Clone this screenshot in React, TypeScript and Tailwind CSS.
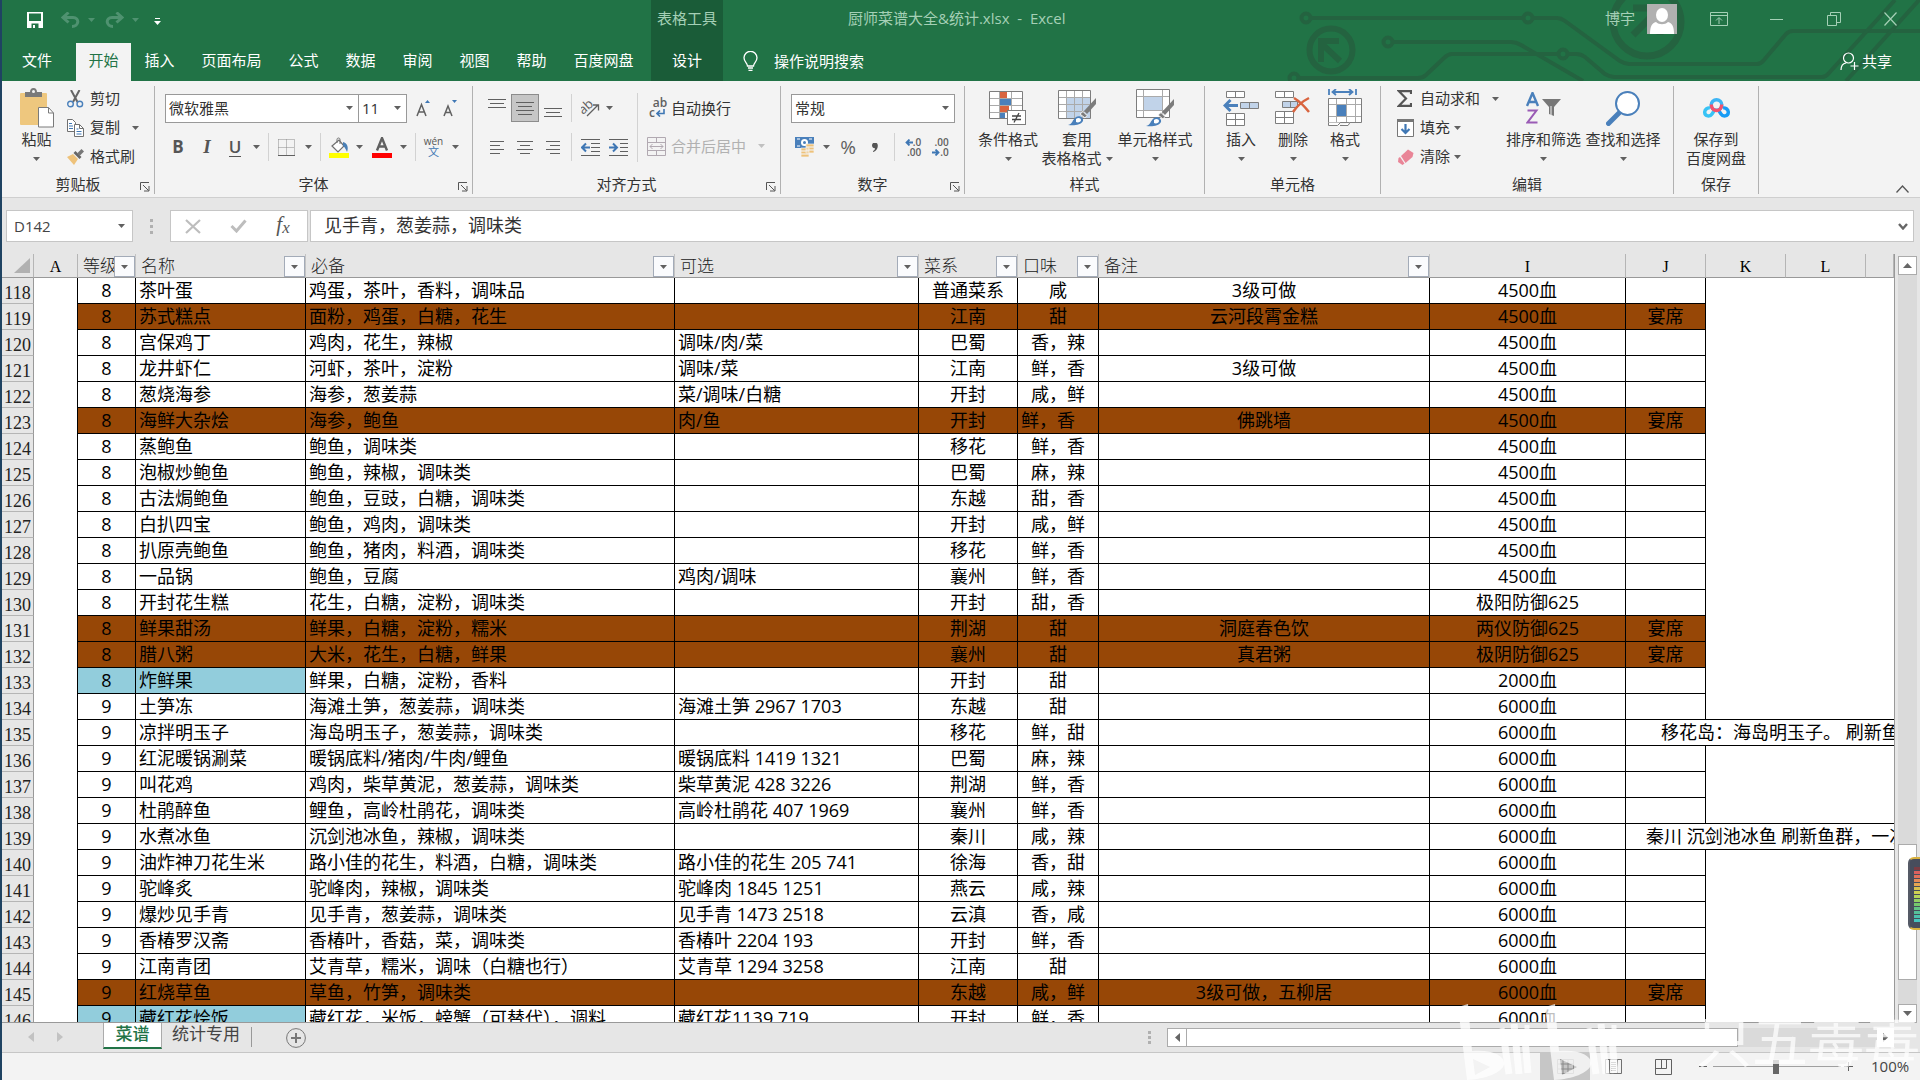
import React from "react";

type Tone = "plain" | "brown" | "blue";
type Row = {
  n: number;
  level: string;
  name: string;
  need: string;
  opt?: string;
  school: string;
  taste: string;
  note?: string;
  effect: string;
  extra?: string;
  tone?: Tone;
  spill?: string;
  spillPad?: string;
  tasteLeft?: boolean;
};

const ROWS: Row[] = [
  { n: 118, level: "8", name: "茶叶蛋", need: "鸡蛋，茶叶，香料，调味品", school: "普通菜系", taste: "咸", note: "3级可做", effect: "4500血" },
  { n: 119, level: "8", name: "苏式糕点", need: "面粉，鸡蛋，白糖，花生", school: "江南", taste: "甜", note: "云河段霄金糕", effect: "4500血", extra: "宴席", tone: "brown" },
  { n: 120, level: "8", name: "宫保鸡丁", need: "鸡肉，花生，辣椒", opt: "调味/肉/菜", school: "巴蜀", taste: "香，辣", effect: "4500血" },
  { n: 121, level: "8", name: "龙井虾仁", need: "河虾，茶叶，淀粉", opt: "调味/菜", school: "江南", taste: "鲜，香", note: "3级可做", effect: "4500血" },
  { n: 122, level: "8", name: "葱烧海参", need: "海参，葱姜蒜", opt: "菜/调味/白糖", school: "开封", taste: "咸，鲜", effect: "4500血" },
  { n: 123, level: "8", name: "海鲜大杂烩", need: "海参，鲍鱼", opt: "肉/鱼", school: "开封", taste: "鲜，香", tasteLeft: true, note: "佛跳墙", effect: "4500血", extra: "宴席", tone: "brown" },
  { n: 124, level: "8", name: "蒸鲍鱼", need: "鲍鱼，调味类", school: "移花", taste: "鲜，香", effect: "4500血" },
  { n: 125, level: "8", name: "泡椒炒鲍鱼", need: "鲍鱼，辣椒，调味类", school: "巴蜀", taste: "麻，辣", effect: "4500血" },
  { n: 126, level: "8", name: "古法焗鲍鱼", need: "鲍鱼，豆豉，白糖，调味类", school: "东越", taste: "甜，香", effect: "4500血" },
  { n: 127, level: "8", name: "白扒四宝", need: "鲍鱼，鸡肉，调味类", school: "开封", taste: "咸，鲜", effect: "4500血" },
  { n: 128, level: "8", name: "扒原壳鲍鱼", need: "鲍鱼，猪肉，料酒，调味类", school: "移花", taste: "鲜，香", effect: "4500血" },
  { n: 129, level: "8", name: "一品锅", need: "鲍鱼，豆腐", opt: "鸡肉/调味", school: "襄州", taste: "鲜，香", effect: "4500血" },
  { n: 130, level: "8", name: "开封花生糕", need: "花生，白糖，淀粉，调味类", school: "开封", taste: "甜，香", effect: "极阳防御625" },
  { n: 131, level: "8", name: "鲜果甜汤", need: "鲜果，白糖，淀粉，糯米", school: "荆湖", taste: "甜", note: "洞庭春色饮", effect: "两仪防御625", extra: "宴席", tone: "brown" },
  { n: 132, level: "8", name: "腊八粥", need: "大米，花生，白糖，鲜果", school: "襄州", taste: "甜", note: "真君粥", effect: "极阴防御625", extra: "宴席", tone: "brown" },
  { n: 133, level: "8", name: "炸鲜果", need: "鲜果，白糖，淀粉，香料", school: "开封", taste: "甜", effect: "2000血", tone: "blue" },
  { n: 134, level: "9", name: "土笋冻", need: "海滩土笋，葱姜蒜，调味类", opt: "海滩土笋 2967 1703", school: "东越", taste: "甜", effect: "6000血" },
  { n: 135, level: "9", name: "凉拌明玉子", need: "海岛明玉子，葱姜蒜，调味类", school: "移花", taste: "鲜，甜", effect: "6000血", spill: "移花岛：海岛明玉子。 刷新鱼群", spillPad: "pl-[35px]" },
  { n: 136, level: "9", name: "红泥暖锅涮菜", need: "暖锅底料/猪肉/牛肉/鲤鱼", opt: "暖锅底料 1419 1321", school: "巴蜀", taste: "麻，辣", effect: "6000血" },
  { n: 137, level: "9", name: "叫花鸡", need: "鸡肉，柴草黄泥，葱姜蒜，调味类", opt: "柴草黄泥 428 3226", school: "荆湖", taste: "鲜，香", effect: "6000血" },
  { n: 138, level: "9", name: "杜鹃醉鱼", need: "鲤鱼，高岭杜鹃花，调味类", opt: "高岭杜鹃花 407 1969", school: "襄州", taste: "鲜，香", effect: "6000血" },
  { n: 139, level: "9", name: "水煮冰鱼", need: "沉剑池冰鱼，辣椒，调味类", school: "秦川", taste: "咸，辣", effect: "6000血", spill: "秦川 沉剑池冰鱼 刷新鱼群，一次", spillPad: "pl-5" },
  { n: 140, level: "9", name: "油炸神刀花生米", need: "路小佳的花生，料酒，白糖，调味类", opt: "路小佳的花生 205 741", school: "徐海", taste: "香，甜", effect: "6000血" },
  { n: 141, level: "9", name: "驼峰炙", need: "驼峰肉，辣椒，调味类", opt: "驼峰肉 1845 1251", school: "燕云", taste: "咸，辣", effect: "6000血" },
  { n: 142, level: "9", name: "爆炒见手青", need: "见手青，葱姜蒜，调味类", opt: "见手青 1473 2518", school: "云滇", taste: "香，咸", effect: "6000血" },
  { n: 143, level: "9", name: "香椿罗汉斋", need: "香椿叶，香菇，菜，调味类", opt: "香椿叶 2204 193", school: "开封", taste: "鲜，香", effect: "6000血" },
  { n: 144, level: "9", name: "江南青团", need: "艾青草，糯米，调味（白糖也行）", opt: "艾青草 1294 3258", school: "江南", taste: "甜", effect: "6000血" },
  { n: 145, level: "9", name: "红烧草鱼", need: "草鱼，竹笋，调味类", school: "东越", taste: "咸，鲜", note: "3级可做，五柳居", effect: "6000血", extra: "宴席", tone: "brown" },
  { n: 146, level: "9", name: "藏红花烩饭", need: "藏红花，米饭，螃蟹（可替代），调料", opt: "藏红花1139 719", school: "开封", taste: "鲜，香", effect: "6000血", tone: "blue" },
];

/* ---------- small shared pieces ---------- */

function Arrow({ className = "text-[#606060]" }: { className?: string }) {
  return (
    <svg width="7" height="4" viewBox="0 0 7 4" className={"shrink-0 " + className} aria-hidden="true">
      <path d="M0 0h7L3.5 4z" fill="currentColor" />
    </svg>
  );
}

function Slot({ w, label, children, className = "" }: { w: string; label: string; children: React.ReactNode; className?: string }) {
  return (
    <button type="button" aria-label={label} className={"flex h-7 shrink-0 items-center justify-center " + w + " " + className}>
      {children}
    </button>
  );
}

function Sep({ w }: { w: string }) {
  return (
    <div className={"flex h-7 shrink-0 justify-center " + w}>
      <div className="w-px bg-[#d2d2d2]" />
    </div>
  );
}

function Group({ w, label, launcher, children }: { w: string; label: string; launcher?: boolean; children: React.ReactNode }) {
  return (
    <section className={"flex h-[108px] shrink-0 flex-col border-r border-[#b1b1b1] " + w}>
      <div className="h-[88px] shrink-0">{children}</div>
      <div className="relative flex h-5 shrink-0 items-center justify-center text-[15px] leading-5 text-[#333]">
        {label}
        {launcher && (
          <button type="button" aria-label={label + "设置"} className="absolute right-1 top-2">
            <svg width="10" height="10" viewBox="0 0 10 10" fill="none" stroke="#555">
              <path d="M.5 8V.5H9M3 3l5.500 5.500M9 4v5H4" />
            </svg>
          </button>
        )}
      </div>
    </section>
  );
}

function Combo({ w, label, value }: { w: string; label: string; value: string }) {
  return (
    <div className={"relative h-[29px] shrink-0 " + w}>
      <select aria-label={label} defaultValue={value} className="h-full w-full appearance-none border border-[#999] bg-white px-[3px] text-[15px] text-[#333]">
        <option>{value}</option>
      </select>
      <span className="pointer-events-none absolute right-[6px] top-3">
        <Arrow />
      </span>
    </div>
  );
}

function Lines({ rows, y = 0 }: { rows: [number, number][]; y?: number }) {
  return (
    <svg width="18" height="28" viewBox="0 0 18 28" stroke="#606060" fill="none">
      {rows.map(([a, b], i) => (
        <path key={i} d={`M${a} ${y + i * 4 + 0.5}H${b}`} />
      ))}
    </svg>
  );
}

function BigButton({ w, icon, lines, arrow = "below" }: { w: string; icon: React.ReactNode; lines: string[]; arrow?: "below" | "side" | "none" }) {
  return (
    <button type="button" className={"flex h-[88px] shrink-0 flex-col items-center text-[15px] leading-[19px] text-[#333] " + w}>
      <span className="flex h-11 items-center justify-center">{icon}</span>
      {lines.map((l, i) => (
        <span key={l} className="flex items-center gap-1 whitespace-nowrap">
          {l}
          {arrow === "side" && i === lines.length - 1 && <Arrow />}
        </span>
      ))}
      {arrow === "below" && (
        <span className="flex h-[19px] items-center">
          <Arrow />
        </span>
      )}
    </button>
  );
}

function SmallButton({ icon, text, arrowGap }: { icon: React.ReactNode; text: string; arrowGap?: string }) {
  return (
    <button type="button" className="flex h-[29px] items-center pb-1 text-[15px] text-[#333]">
      <span className="flex w-[23px] items-center">{icon}</span>
      <span className="whitespace-nowrap">{text}</span>
      {arrowGap && (
        <span className={arrowGap}>
          <Arrow />
        </span>
      )}
    </button>
  );
}

/* ---------- ribbon icons ---------- */

const PasteIcon = () => (
  <svg width="36" height="40" viewBox="0 0 36 40">
    <rect x="1" y="5" width="27" height="32" rx="1" fill="#eec77e" />
    <path d="M6 9V4h5c0-2 1-4 3.500-4S18 2 18 4h5v5z" fill="#7a7a7a" />
    <circle cx="14.500" cy="3.500" r="1.500" fill="#f3f3f3" />
    <path d="M19.500 19.500h10l5 5.500v14h-15z" fill="#fff" stroke="#7a7a7a" />
    <path d="M29.500 19.500V25h5" fill="none" stroke="#7a7a7a" />
  </svg>
);
const CutIcon = () => (
  <svg width="17" height="18" viewBox="0 0 17 18" fill="none">
    <path d="M4 0l6.500 12M12.500 0L6 12" stroke="#666" strokeWidth="2" />
    <circle cx="3.500" cy="14" r="2.800" stroke="#4a80bb" strokeWidth="1.400" />
    <circle cx="12.800" cy="14" r="2.800" stroke="#4a80bb" strokeWidth="1.400" />
  </svg>
);
const CopyIcon = () => (
  <svg width="17" height="18" viewBox="0 0 17 18">
    <g fill="#fff" stroke="#707070">
      <path d="M.5.5h5l3 3v9h-8z" />
      <path d="M7.500 5.500h5l4 4v8h-9z" />
      <path d="M12.500 5.500v4h4" fill="none" />
    </g>
    <path d="M2 4.500h3M2 7h4M2 9.500h4M9.500 10h2M9.500 12.500h5M9.500 15h5" stroke="#3f77b4" />
  </svg>
);
const BrushIcon = () => (
  <svg width="17" height="16" viewBox="0 0 17 16">
    <path d="M0 8l6-3 5 5-4 6z" fill="#eec27a" />
    <path d="M6.500 4l2-2 6 6-2 2z" fill="#666" />
    <path d="M10 4.500L14.500 0 17 2.500 12.500 7z" fill="#777" />
  </svg>
);
const BorderIcon = () => (
  <svg width="17" height="17" viewBox="0 0 17 17" fill="none">
    <path d="M.5.500h16M.5 8.500h16M.5.500v15M8.500.500v15M16.500.500v15" stroke="#8a8a8a" strokeDasharray="1 1" />
    <path d="M0 16.500h17" stroke="#606060" />
  </svg>
);
const FillIcon = () => (
  <svg width="20" height="21" viewBox="0 0 20 21">
    <path d="M3 9l7-6 5 6-6 6z" fill="#fff" stroke="#707070" strokeWidth="1.200" />
    <path d="M8 6V2.500C8 .5 11 .5 11 2.500V7" fill="none" stroke="#707070" />
    <path d="M14 5c4 1 6 5 4 10-1-2-2-5-4-6z" fill="#4a7fb5" />
    <rect y="16" width="20" height="5" fill="#ff0" />
  </svg>
);
const PersonaIcon = () => (
  <svg width="30" height="30" viewBox="0 0 30 30">
    <rect width="30" height="30" fill="#b0b0b0" />
    <ellipse cx="15" cy="11" rx="6" ry="7" fill="#fff" />
    <path d="M3 30c0-8 2-11 6-12 3 3 9 3 12 0 4 1 6 4 6 12z" fill="#fff" />
  </svg>
);

const PaintBrush = () => (
  <g>
    <path d="M38 8L26 21l3 3 9-10z" fill="#7c7c7c" />
    <path d="M25 21.500l4 4-2 2.500-5-4z" fill="#7c7c7c" stroke="#f3f3f3" />
    <path d="M10 35c5-1 4-5 8-8 4-2 8 1 7 4-2 4-9 5-15 4z" fill="#4a80bb" />
    <path d="M18 29c2-2 5-1 5 1s-3 3-5 2z" fill="#fff" />
  </g>
);

const CondIcon = () => (
  <svg width="38" height="35" viewBox="0 0 38 35">
    <path d="M.5.500h33v27h-33z" fill="#fff" />
    <rect x="11" y="1" width="7" height="6" fill="#d9643f" />
    <rect x="11" y="8" width="11" height="6" fill="#4a80bb" />
    <rect x="11" y="15" width="9" height="6" fill="#d9643f" />
    <rect x="11" y="22" width="5" height="5" fill="#4a80bb" />
    <path d="M.5 7.500h33M.5 14.500h33M.5 21.500h33M10.500.500v27M22.500.500v27" stroke="#aaa" fill="none" />
    <path d="M.5.500h33v27h-33z" fill="none" stroke="#7d7d7d" />
    <rect x="18.500" y="19.500" width="18" height="14" fill="#fff" stroke="#7d7d7d" />
    <path d="M23 25h9M23 28.500h9M30 22l-5 9.500" stroke="#444" strokeWidth="1.300" />
  </svg>
);
const TableFmtIcon = () => (
  <svg width="39" height="36" viewBox="0 0 39 36">
    <path d="M.5.500h32v28h-32z" fill="#fff" />
    <path d="M9 8h23v20H9z" fill="#c1d3e9" />
    <path d="M.5 7.500h32M.5 14.500h32M.5 21.500h32M8.500.500v28M16.500.500v28M24.500.500v28" stroke="#aaa" fill="none" />
    <path d="M.5.500h32v28h-32z" fill="none" stroke="#7d7d7d" />
    <PaintBrush />
  </svg>
);
const CellStyleIcon = () => (
  <svg width="39" height="38" viewBox="0 0 39 38">
    <path d="M.5.500h33v28h-33z" fill="#fff" />
    <path d="M.5 7.500h33M.5 21.500h33M7.500.500v28M26.500.500v28" stroke="#aaa" fill="none" />
    <path d="M8 8h18v13H8z" fill="#c1d3e9" />
    <path d="M.5.500h33v28h-33z" fill="none" stroke="#7d7d7d" />
    <g transform="translate(0 2)">
      <PaintBrush />
    </g>
  </svg>
);
const InsertIcon = () => (
  <svg width="36" height="36" viewBox="0 0 36 36">
    <g fill="#fff" stroke="#7d7d7d">
      <path d="M3.500 1.500h18v6h-18zM12.500 1.500v6" />
      <path d="M3.500 23.500h18v12h-18zM12.500 23.500v12M3.500 29.500h18" />
      <path d="M17.500 12.500h18v6h-18zM26.500 12.500v6" fill="#c1d3e9" />
    </g>
    <path d="M15 15.500H2M7.500 10L2 15.500 7.500 21" stroke="#4a80bb" strokeWidth="3" fill="none" />
  </svg>
);
const DeleteIcon = () => (
  <svg width="36" height="36" viewBox="0 0 36 36">
    <g fill="#fff" stroke="#7d7d7d">
      <path d="M.5 1.500h18v6H.5zM9.500 1.500v6" />
      <path d="M.5 21.500h18v12H.5zM9.500 21.500v12M.5 27.500h18" />
      <path d="M7.500 11.500h15v6h-15zM15.500 11.500v6" fill="#c1d3e9" />
    </g>
    <path d="M19 8c5 3 11 9 15 14M34 8c-6 3-12 8-16 14" stroke="#d9643f" strokeWidth="2.500" fill="none" />
  </svg>
);
const FormatIcon = () => (
  <svg width="35" height="38" viewBox="0 0 35 38">
    <path d="M1 0v6M28 0v6M5 3h19M8 0L4.500 3 8 6M21 0l3.500 3L21 6" stroke="#4a80bb" strokeWidth="1.800" fill="none" />
    <path d="M.5 9.500h33v24h-33z" fill="#fff" />
    <path d="M.5 15.500h33M.5 27.500h33M8.500 9.500v24M18.500 9.500v24M27.500 9.500v24" stroke="#aaa" fill="none" />
    <path d="M.5 9.500h33v24h-33z" fill="none" stroke="#7d7d7d" />
    <rect x="9" y="16" width="9" height="11" fill="#4a80bb" />
    <path d="M.5 33.500v3h9l3-3M12 36.500h8l2-3" fill="#fff" stroke="#7d7d7d" />
  </svg>
);
const SortIcon = () => (
  <svg width="35" height="32" viewBox="0 0 35 32" fill="none">
    <path d="M1 14L6.500 1 12 14M3 10h7" stroke="#4a80bb" strokeWidth="2.400" />
    <path d="M1.500 18.500h9L1.500 30.500h10" stroke="#9a5bb5" strokeWidth="2" />
    <path d="M16 7h19l-7 8v9l-5-2v-7z" fill="#777" />
    <path d="M25 14v9" stroke="#f3f3f3" />
  </svg>
);
const FindIcon = () => (
  <svg width="35" height="35" viewBox="0 0 35 35">
    <path d="M14 21L2.500 32.500" stroke="#4a80bb" strokeWidth="5" strokeLinecap="round" />
    <circle cx="21.500" cy="12.500" r="11.500" fill="#fff" stroke="#4a80bb" strokeWidth="2" />
  </svg>
);
const CloudIcon = () => (
  <svg width="27" height="21" viewBox="0 0 27 21" fill="none" strokeWidth="3.400">
    <circle cx="13.500" cy="7" r="5.300" stroke="#3db5f5" />
    <path d="M12 11.500l-3 4.500c-2 3-7 2.500-7.300-1.500C1.500 11 5 9.500 7 10" stroke="#38c3f5" />
    <path d="M15 11.500l3 4.500c2 3 7 2.500 7.300-1.500.2-3.500-3.300-5-5.300-4.500" stroke="#189cf5" />
    <path d="M8.300 6.500c.4 8 9.900 8 10.400 0" stroke="#f5516c" />
  </svg>
);

/* ---------- title bar and tabs ---------- */

const TABS: [string, string][] = [
  ["插入", "w-[57px]"],
  ["页面布局", "w-[87px]"],
  ["公式", "w-[57px]"],
  ["数据", "w-[57px]"],
  ["审阅", "w-[57px]"],
  ["视图", "w-[57px]"],
  ["帮助", "w-[57px]"],
  ["百度网盘", "w-[87px]"],
];

function Circuit() {
  return (
    <svg width="640" height="81" viewBox="0 0 640 81" fill="none" stroke="#246340" className="pointer-events-none absolute right-0 top-0" aria-hidden="true">
      <g strokeWidth="4">
        <circle cx="26" cy="18" r="4.500" />
        <circle cx="248" cy="18" r="4.500" />
        <path d="M31 18h212M253 18h24q4 0 8 3l55 40q5 3 9 3h128q4 0 7-4l22-26q3-3 7-3h129" />
        <circle cx="108" cy="42" r="4.500" />
        <path d="M113 42h118q5 0 10 3l62 36" />
        <circle cx="283" cy="54" r="4.500" />
        <path d="M278 54H172q-4 0-8 4l-18 17q-3 3-8 3H19M288 54h8q5 0 9 3l20 17q5 3 9 3h208q4 0 7-4L615 0" />
        <circle cx="14" cy="78" r="4.500" />
        <path d="M566 81l74-82" />
      </g>
      <circle cx="51" cy="50" r="21.500" strokeWidth="6" />
      <path d="M38 41h21M41 40v22M42 44l18 17" strokeWidth="6" />
      <circle cx="367" cy="22" r="34" strokeWidth="7" />
      <path d="M353 35l22-22M353 8h27v27" strokeWidth="7" />
    </svg>
  );
}

function Header() {
  return (
    <header className="relative flex h-[81px] shrink-0 bg-[#217346] text-[15px] text-white">
      <Circuit />
      <div className="flex w-[649px] shrink-0 flex-col">
        <div className="flex h-[43px] items-center pb-1 pl-[25px]">
          <button type="button" aria-label="保存" className="mr-[18px]">
            <svg width="16" height="16" viewBox="0 0 16 16">
              <path d="M0 0h16v16H0z" fill="#fff" />
              <path d="M2 1.500h12V9H2zM4.500 11.500h7V16h-7z" fill="#217346" />
              <path d="M6 13h2v3H6z" fill="#fff" />
            </svg>
          </button>
          <button type="button" aria-label="撤消" className="flex items-center gap-2">
            <svg width="19" height="16" viewBox="0 0 19 16" fill="none" stroke="#4f9270" strokeWidth="3">
              <path d="M7.500.5L2 5.500l5.500 5M3 5.500h9c7 0 6 9-1 9" />
            </svg>
            <Arrow className="text-[#4f9270]" />
          </button>
          <button type="button" aria-label="恢复" className="ml-[10px] flex items-center gap-2">
            <svg width="19" height="16" viewBox="0 0 19 16" fill="none" stroke="#4f9270" strokeWidth="3">
              <path d="M11.500.5l5.500 5-5.500 5M16 5.500H7c-7 0-6 9 1 9" />
            </svg>
            <Arrow className="text-[#4f9270]" />
          </button>
          <button type="button" aria-label="自定义快速访问工具栏" className="ml-[15px] mt-1">
            <svg width="7" height="7" viewBox="0 0 7 7" fill="#fff">
              <path d="M1 0h5v1H1zM0 3h7L3.500 7z" />
            </svg>
          </button>
        </div>
        <nav className="flex h-[38px] items-stretch">
          <button type="button" className="w-[74px] pb-1 pr-1">文件</button>
          <button type="button" className="w-[55px] bg-[#f3f3f3] pb-1 text-[#217346]">开始</button>
          {TABS.map(([t, w]) => (
            <button key={t} type="button" className={"pb-1 " + w}>
              {t}
            </button>
          ))}
        </nav>
      </div>
      <div className="flex w-[72px] shrink-0 flex-col bg-[#1a5c38]">
        <div className="flex h-[43px] items-center justify-center pb-[6px] text-[#a5d0b6]">表格工具</div>
        <button type="button" className="h-[38px] pb-1">设计</button>
      </div>
      <div className="flex min-w-0 flex-1 flex-col">
        <div className="flex h-[43px] items-center pb-[6px] text-[#a5d0b6]">
          <h1 className="ml-[125px] whitespace-pre">厨师菜谱大全&amp;统计.xlsx  -  Excel</h1>
          <div className="relative ml-auto flex items-center">
            <span>博宇</span>
            <span className="ml-3">
              <PersonaIcon />
            </span>
            <button type="button" aria-label="功能区显示选项" className="ml-[33px]">
              <svg width="18" height="14" viewBox="0 0 18 14" fill="none" stroke="#a5d0b6">
                <path d="M.5.500h17v13H.5zM.5 3.500h17M9 12V6M6 8.500l3-3 3 3" />
              </svg>
            </button>
            <button type="button" aria-label="最小化" className="ml-[42px]">
              <svg width="13" height="14" viewBox="0 0 13 14" stroke="#a5d0b6">
                <path d="M0 7.500h13" />
              </svg>
            </button>
            <button type="button" aria-label="还原" className="ml-11">
              <svg width="14" height="14" viewBox="0 0 14 14" fill="none" stroke="#a5d0b6">
                <path d="M.5 3.500h9v10h-9zM3.500 3.500v-3h10v10h-4" />
              </svg>
            </button>
            <button type="button" aria-label="关闭" className="ml-[43px] mr-[23px]">
              <svg width="13" height="14" viewBox="0 0 13 14" fill="none" stroke="#a5d0b6" strokeWidth="1.200">
                <path d="M.5.500l12 13M12.500.500l-12 13" />
              </svg>
            </button>
          </div>
        </div>
        <div className="flex h-[38px] items-center pb-[2px]">
          <button type="button" className="ml-5 flex items-center gap-4">
            <svg width="15" height="20" viewBox="0 0 15 20" fill="none" stroke="#fff" strokeWidth="1.300">
              <path d="M4.500 15c0-3-3.500-4-3.500-8.200a6.500 6.500 0 0113 0C14 11 10.500 12 10.500 15zM5 17h5M5.500 19.300h4" />
            </svg>
            操作说明搜索
          </button>
          <button type="button" className="relative ml-auto mr-7 flex items-center gap-[3px]">
            <svg width="19" height="19" viewBox="0 0 19 19" fill="none" stroke="#fff" strokeWidth="1.200">
              <circle cx="8.500" cy="6" r="5" />
              <path d="M1 18c0-4 2-6.500 5-7M14.500 10v8M10.500 14h8" />
            </svg>
            共享
          </button>
        </div>
      </div>
    </header>
  );
}

/* ---------- ribbon ---------- */

function Ribbon() {
  return (
    <div className="flex h-[117px] shrink-0 border-b border-[#cfcfcf] bg-[#f3f3f3] pt-[5px]">
      <Group w="w-[153px]" label="剪贴板" launcher>
        <div className="flex">
          <BigButton w="w-[65px] pl-1" icon={<PasteIcon />} lines={["粘贴"]} />
          <div className="flex flex-col">
            <SmallButton icon={<CutIcon />} text="剪切" />
            <SmallButton icon={<CopyIcon />} text="复制" arrowGap="ml-3" />
            <SmallButton icon={<BrushIcon />} text="格式刷" />
          </div>
        </div>
      </Group>

      <Group w="w-[318px]" label="字体" launcher>
        <div className="flex items-center pl-[10px] pt-2">
          <Combo w="w-[194px]" label="字体" value="微软雅黑" />
          <Combo w="-ml-px w-[49px]" label="字号" value="11" />
          <Slot w="w-8" label="增大字号">
            <svg width="15" height="17" viewBox="0 0 15 17" fill="none">
              <path d="M1 16L5.500 4.500 10 16M2.500 12h6" stroke="#606060" strokeWidth="1.500" />
              <path d="M9 3l2.500-3L14 3z" fill="#3f77b4" />
            </svg>
          </Slot>
          <Slot w="w-[22px]" label="减小字号">
            <svg width="15" height="17" viewBox="0 0 15 17" fill="none">
              <path d="M1 16L5 6l4 10M2.500 12.500h5" stroke="#606060" strokeWidth="1.500" />
              <path d="M9 0h5l-2.500 3z" fill="#3f77b4" />
            </svg>
          </Slot>
        </div>
        <div className="flex items-center pl-[11px] pt-[10px] text-[#555]">
          <Slot w="w-6" label="加粗"><b className="text-[17px]">B</b></Slot>
          <Slot w="w-[34px]" label="倾斜"><i className="font-['Liberation_Serif'] text-[19px] font-bold">I</i></Slot>
          <Slot w="w-[22px]" label="下划线"><span className="border-b border-[#555] text-[17px] font-semibold leading-[18px]">U</span></Slot>
          <Slot w="w-5" label="下划线样式"><Arrow /></Slot>
          <Sep w="w-1" />
          <Slot w="w-[33px]" label="边框"><BorderIcon /></Slot>
          <Slot w="w-[10px]" label="边框样式"><Arrow /></Slot>
          <Sep w="w-[14px]" />
          <Slot w="w-6" label="填充颜色"><FillIcon /></Slot>
          <Slot w="w-[17px]" label="选择填充颜色"><Arrow /></Slot>
          <Slot w="w-7" label="字体颜色">
            <svg width="20" height="21" viewBox="0 0 20 21">
              <path d="M5 13.500L10 1l5 12.500M7 9.500h6" stroke="#606060" strokeWidth="2.400" fill="none" />
              <rect y="16" width="20" height="5" fill="#f00" />
            </svg>
          </Slot>
          <Slot w="w-[14px]" label="选择字体颜色"><Arrow /></Slot>
          <Sep w="w-[10px]" />
          <Slot w="w-[27px]" label="拼音">
            <span className="flex flex-col items-center text-[10px] leading-[9px]">
              wén<span className="text-[11px] leading-[11px] text-[#3f77b4]">文</span>
            </span>
          </Slot>
          <Slot w="w-4" label="拼音选项"><Arrow /></Slot>
        </div>
      </Group>

      <Group w="w-[308px]" label="对齐方式" launcher>
        <div className="flex">
          <div className="w-[164px] pl-[9px] pt-2">
            <div className="flex items-center">
              <Slot w="w-[29px]" label="顶端对齐"><Lines rows={[[0, 18], [2, 16], [0, 18]]} y={5} /></Slot>
              <Slot w="w-7" label="垂直居中" className="border border-[#8c8c8c] bg-[#c6c6c6]"><Lines rows={[[0, 18], [2, 16], [0, 18], [2, 16]]} y={8} /></Slot>
              <Slot w="w-7" label="底端对齐"><Lines rows={[[0, 18], [2, 16], [0, 18]]} y={14} /></Slot>
              <Sep w="w-2" />
              <Slot w="w-[30px]" label="方向">
                <svg width="19" height="18" viewBox="0 0 19 18" fill="none">
                  <text x="0" y="13" fontSize="13" fill="#606060" transform="rotate(-42 5 12)" fontFamily="Open Sans">ab</text>
                  <path d="M6 17L17 6M12 6h5.500v5.500" stroke="#606060" strokeWidth="1.300" />
                </svg>
              </Slot>
              <Slot w="w-2" label="方向选项"><Arrow /></Slot>
            </div>
            <div className="flex items-center pt-[11px]">
              <Slot w="w-[29px]" label="左对齐"><Lines rows={[[2, 16], [2, 12], [2, 16], [2, 12]]} y={8} /></Slot>
              <Slot w="w-7" label="居中"><Lines rows={[[1, 17], [4, 14], [1, 17], [4, 14]]} y={8} /></Slot>
              <Slot w="w-7" label="右对齐"><Lines rows={[[2, 16], [6, 16], [2, 16], [6, 16]]} y={8} /></Slot>
              <Sep w="w-2" />
              <Slot w="w-[30px]" label="减少缩进量">
                <svg width="19" height="17" viewBox="0 0 19 17" fill="none" stroke="#606060">
                  <path d="M0 .5h19M10 4.500h9M10 8.500h9M10 12.500h9M0 16.500h19" />
                  <path d="M9 8.500H2M5 4.500l-4 4 4 4" stroke="#3f77b4" strokeWidth="2" />
                </svg>
              </Slot>
              <Slot w="w-[26px]" label="增加缩进量">
                <svg width="19" height="17" viewBox="0 0 19 17" fill="none" stroke="#606060">
                  <path d="M0 .5h19M11 4.500h8M11 8.500h8M11 12.500h8M0 16.500h19" />
                  <path d="M0 8.500h7M4 4.500l4 4-4 4" stroke="#3f77b4" strokeWidth="2" />
                </svg>
              </Slot>
            </div>
          </div>
          <div className="mt-[7px] h-[69px] border-l border-[#d2d2d2] pl-[9px]">
            <button type="button" className="flex h-[30px] items-center text-[15px] text-[#333]">
              <span className="flex w-6 flex-col pl-[2px] text-[12px] font-semibold leading-[10px] text-[#606060]">
                <span>ab</span>
                <span className="flex items-center gap-px text-left">
                  c
                  <svg width="9" height="8" viewBox="0 0 9 8" fill="none" stroke="#3f77b4" strokeWidth="1.600">
                    <path d="M8 0v4.500H1.500M4 1.500l-3 3 3 3" />
                  </svg>
                </span>
              </span>
              自动换行
            </button>
            <button type="button" disabled className="mt-2 flex h-[30px] items-center text-[15px] text-[#b1b1b1]">
              <span className="w-6">
                <svg width="19" height="19" viewBox="0 0 19 19" fill="none" stroke="#b1a9b1">
                  <path d="M.5.500h18v18H.5zM.5 5.500h18M.5 13.500h18M9.500.500v5M9.500 13.500v5M3 9.500h13M5.500 7L3 9.500 5.500 12M13.500 7L16 9.500 13.500 12" />
                </svg>
              </span>
              合并后居中
              <span className="ml-3">
                <Arrow className="text-[#c0c0c0]" />
              </span>
            </button>
          </div>
        </div>
      </Group>

      <Group w="w-[184px]" label="数字" launcher>
        <div className="pl-[10px] pt-2">
          <Combo w="w-[164px]" label="数字格式" value="常规" />
        </div>
        <div className="flex items-center pl-[10px] pt-[10px] text-[#606060]">
          <Slot w="w-7" label="会计数字格式">
            <svg width="20" height="20" viewBox="0 0 20 20">
              <rect width="19" height="11" fill="#4a80bb" />
              <circle cx="9.500" cy="5.500" r="3.500" fill="#fff" />
              <circle cx="9.500" cy="5.500" r="1.500" fill="#4a80bb" />
              <path d="M2 2h3M2 9h3M14 2h3M14 9h3" stroke="#fff" />
              <g fill="#eec27a" stroke="#f3f3f3" strokeWidth=".7">
                <path d="M11 7h8v3h-8zM11 10h8v3h-8zM11 13h8v3h-8zM6 11h8v3H6zM6 14h8v3H6zM6 17h8v3H6z" />
              </g>
            </svg>
          </Slot>
          <Slot w="w-[14px]" label="会计格式选项"><Arrow /></Slot>
          <Slot w="w-[30px]" label="百分比样式"><span className="text-[19px]">%</span></Slot>
          <Slot w="w-6" label="千位分隔样式">
            <svg width="6" height="9" viewBox="0 0 6 9" fill="#555">
              <path d="M0 2.500a2.800 2.800 0 015.800 0C6 5.500 4 8 1 9V8c1.500-.7 2-1.500 2-2.800C1.500 5.400 0 4.200 0 2.500z" />
            </svg>
          </Slot>
          <Sep w="w-[14px]" />
          <Slot w="w-6" label="增加小数位数">
            <span className="flex flex-col items-end text-[10px] font-semibold leading-[10px]">
              <span className="flex items-center">
                <svg width="8" height="7" viewBox="0 0 8 7" fill="none" stroke="#3f77b4" strokeWidth="1.800"><path d="M8 3.500H2M4.500.5l-3 3 3 3" /></svg>.0
              </span>
              .00
            </span>
          </Slot>
          <Slot w="w-[31px]" label="减少小数位数">
            <span className="flex flex-col items-end text-[10px] font-semibold leading-[10px]">
              .00
              <span className="flex items-center">
                <svg width="8" height="7" viewBox="0 0 8 7" fill="none" stroke="#3f77b4" strokeWidth="1.800"><path d="M0 3.500h6M3.500.5l3 3-3 3" /></svg>.0
              </span>
            </span>
          </Slot>
        </div>
      </Group>

      <Group w="w-[240px]" label="样式">
        <div className="flex pl-2">
          <BigButton w="w-[70px]" icon={<CondIcon />} lines={["条件格式"]} />
          <BigButton w="w-[68px]" icon={<TableFmtIcon />} lines={["套用", "表格格式"]} arrow="side" />
          <BigButton w="w-[88px]" icon={<CellStyleIcon />} lines={["单元格样式"]} />
        </div>
      </Group>

      <Group w="w-[176px]" label="单元格">
        <div className="flex pl-[10px]">
          <BigButton w="w-[52px]" icon={<InsertIcon />} lines={["插入"]} />
          <BigButton w="w-[52px]" icon={<DeleteIcon />} lines={["删除"]} />
          <BigButton w="w-[52px]" icon={<FormatIcon />} lines={["格式"]} />
        </div>
      </Group>

      <Group w="w-[293px]" label="编辑">
        <div className="flex pl-4">
          <div className="flex w-[107px] flex-col">
            <SmallButton
              icon={
                <svg width="15" height="17" viewBox="0 0 15 17" fill="none" stroke="#555" strokeWidth="2.200">
                  <path d="M14 4V1.200H2L9 8.500l-7 7.300h12V13" />
                </svg>
              }
              text="自动求和"
              arrowGap="ml-3"
            />
            <SmallButton
              icon={
                <svg width="17" height="18" viewBox="0 0 17 18" fill="none">
                  <path d="M.5.500h16v17H.5z" fill="#fff" stroke="#777" />
                  <path d="M0 1.500h17" stroke="#777" strokeWidth="3" />
                  <path d="M8.500 5v8M4.500 10l4 4 4-4" stroke="#3f77b4" strokeWidth="2.200" />
                </svg>
              }
              text="填充"
              arrowGap="ml-1"
            />
            <SmallButton
              icon={
                <svg width="17" height="16" viewBox="0 0 17 16">
                  <path d="M4 7l7-6.500L16.500 4l-1 4-7 6z" fill="#e98597" />
                  <path d="M3 8l4.500 6.500L5.500 16 1 13l.500-4z" fill="#e98597" />
                </svg>
              }
              text="清除"
              arrowGap="ml-1"
            />
          </div>
          <BigButton w="w-[79px]" icon={<SortIcon />} lines={["排序和筛选"]} />
          <BigButton w="w-20" icon={<FindIcon />} lines={["查找和选择"]} />
        </div>
      </Group>

      <Group w="w-[85px]" label="保存">
        <BigButton w="w-full" icon={<CloudIcon />} lines={["保存到", "百度网盘"]} arrow="none" />
      </Group>

      <button type="button" aria-label="折叠功能区" className="mb-1 ml-auto mr-[11px] self-end">
        <svg width="13" height="8" viewBox="0 0 13 8" fill="none" stroke="#555" strokeWidth="1.300">
          <path d="M.5 7.500l6-6.500 6 6.500" />
        </svg>
      </button>
    </div>
  );
}

/* ---------- formula bar ---------- */

function FormulaBar() {
  return (
    <div className="flex h-14 shrink-0 items-center bg-[#e6e6e6] pl-1 pr-[6px]">
      <div className="flex h-8 w-[127px] items-center border border-[#c6c6c6] bg-white pr-[7px]">
        <input aria-label="名称框" defaultValue="D142" className="min-w-0 flex-1 pl-[7px] text-[15px] text-[#444] outline-none" />
        <Arrow />
      </div>
      <div className="flex w-[37px] flex-col items-center gap-[3px]">
        <i className="size-[3px] bg-[#b0b0b0]" />
        <i className="size-[3px] bg-[#b0b0b0]" />
        <i className="size-[3px] bg-[#b0b0b0]" />
      </div>
      <div className="flex h-8 w-[138px] items-center border border-[#c6c6c6] bg-white">
        <button type="button" aria-label="取消" className="flex w-11 justify-center">
          <svg width="16" height="15" viewBox="0 0 16 15" stroke="#bdbdbd" strokeWidth="2.200"><path d="M1 1l14 13M15 1L1 14" /></svg>
        </button>
        <button type="button" aria-label="输入" className="flex w-[46px] justify-center">
          <svg width="17" height="14" viewBox="0 0 17 14" fill="none" stroke="#bdbdbd" strokeWidth="3"><path d="M1.500 7l5 5L15.500 1.500" /></svg>
        </button>
        <button type="button" aria-label="插入函数" className="flex w-11 justify-center font-['Liberation_Serif'] text-[21px] italic leading-6 text-[#555]">
          f<span className="pt-1 text-[17px]">x</span>
        </button>
      </div>
      <div className="ml-[2px] flex h-8 flex-1 items-center border border-[#c6c6c6] bg-white pr-[5px]">
        <input aria-label="编辑栏" defaultValue="见手青，葱姜蒜，调味类" className="min-w-0 flex-1 pb-[2px] pl-[13px] text-[18px] text-[#333] outline-none" />
        <svg width="10" height="7" viewBox="0 0 10 7" fill="none" stroke="#666" strokeWidth="2.400"><path d="M1 1l4 4.500L9 1" /></svg>
      </div>
    </div>
  );
}

/* ---------- worksheet ---------- */

function FilterHead({ text }: { text: string }) {
  return (
    <th scope="col" className="border-b border-r border-b-[#999] border-r-[#c4c4c4] p-0 text-left font-light">
      <div className="flex h-[23px] items-center">
        <span className="min-w-0 flex-1 overflow-hidden whitespace-nowrap pl-[5px] text-[17px] text-[#222]">{text}</span>
        <button type="button" aria-label={"筛选" + text} className="flex h-[21px] w-[21px] shrink-0 items-center justify-center self-end border border-[#a3abb8] bg-[#fafbfd]">
          <Arrow />
        </button>
      </div>
    </th>
  );
}

function LetterHead({ text }: { text: string }) {
  return (
    <th scope="col" className="border-b border-r border-b-[#999] border-r-[#b5b5b5] p-0 pt-[3px] text-center font-['Liberation_Serif'] text-[16px] font-normal leading-5 text-black">
      {text}
    </th>
  );
}

const WIDTHS = ["w-[32px]", "w-[44px]", "w-[58px]", "w-[170px]", "w-[369px]", "w-[244px]", "w-[99px]", "w-[81px]", "w-[331px]", "w-[196px]", "w-[80px]", "w-[80px]", "w-[80px]", "w-[28px]"];

function Sheet() {
  const cell = "h-[26px] overflow-hidden whitespace-nowrap border-b border-r border-black p-0 leading-[25px]";
  return (
    <table className="w-full min-w-[1892px] table-fixed border-separate border-spacing-0 bg-white text-[18px] text-black">
      <colgroup>
        {WIDTHS.map((w, i) => (
          <col key={i} className={w} />
        ))}
      </colgroup>
      <thead className="bg-[#e6e6e6]">
        <tr className="h-6">
          <th scope="col" className="border-b border-r border-b-[#999] border-r-[#b5b5b5] p-0">
            <svg width="16" height="15" viewBox="0 0 16 15" className="ml-3" aria-label="全选" role="img"><path d="M16 0v15H0z" fill="#b1b1b1" /></svg>
          </th>
          <LetterHead text="A" />
          {["等级", "名称", "必备", "可选", "菜系", "口味", "备注"].map((t) => (
            <FilterHead key={t} text={t} />
          ))}
          {["I", "J", "K", "L", ""].map((t) => (
            <LetterHead key={t} text={t} />
          ))}
        </tr>
      </thead>
      <tbody>
        {ROWS.map((r, i) => {
          const brown = r.tone === "brown" ? " bg-[#974706]" : "";
          const tag = r.tone === "blue" ? " bg-[#92cddc]" : brown;
          const tail = ROWS[i + 1]?.spill ? "border-b border-black" : "";
          return (
            <tr key={r.n}>
              <th scope="row" className="h-[26px] border-b border-r border-b-[#b5b5b5] border-r-[#999] bg-[#e6e6e6] p-0 pt-[5px] text-center font-['Liberation_Serif'] text-[18px] font-normal leading-5 text-[#222]">
                {r.n}
              </th>
              <td className="border-r border-black p-0" />
              <td className={cell + " text-center" + tag}>{r.level}</td>
              <td className={cell + " pl-[3px]" + tag}>{r.name}</td>
              <td className={cell + " pl-[3px]" + brown}>{r.need}</td>
              <td className={cell + " pl-[3px]" + brown}>{r.opt}</td>
              <td className={cell + " text-center" + brown}>{r.school}</td>
              <td className={cell + (r.tasteLeft ? " pl-[3px]" : " text-center") + brown}>{r.taste}</td>
              <td className={cell + " text-center" + brown}>{r.note}</td>
              <td className={cell + " text-center" + brown}>{r.effect}</td>
              {r.spill ? (
                <td colSpan={4} className={"h-[26px] overflow-hidden whitespace-nowrap border-b border-black p-0 leading-[25px] " + r.spillPad}>
                  {r.spill}
                </td>
              ) : (
                <>
                  <td className={cell + " text-center" + brown}>{r.extra}</td>
                  <td colSpan={3} className={tail} />
                </>
              )}
            </tr>
          );
        })}
      </tbody>
    </table>
  );
}

function VScroll() {
  const btn = "flex h-[19px] shrink-0 items-center justify-center border border-[#ababab] bg-white";
  return (
    <div className="mr-[3px] mt-[2px] flex w-[19px] shrink-0 flex-col bg-[#dadada]">
      <button type="button" aria-label="向上滚动" className={btn}>
        <svg width="9" height="5" viewBox="0 0 9 5"><path d="M0 5h9L4.500 0z" fill="#666" /></svg>
      </button>
      <div className="flex-1" />
      <div className="h-[136px] shrink-0 border border-[#ababab] bg-white" />
      <div className="h-6 shrink-0" />
      <button type="button" aria-label="向下滚动" className={btn}>
        <svg width="9" height="5" viewBox="0 0 9 5"><path d="M0 0h9L4.500 5z" fill="#666" /></svg>
      </button>
    </div>
  );
}

/* ---------- sheet tabs and status bar ---------- */

function SheetTabs() {
  return (
    <div className="flex h-[30px] shrink-0 items-start border-b border-[#c6c6c6] bg-[#e6e6e6]">
      <button type="button" aria-label="上一张工作表" className="ml-[26px] mt-[9px]">
        <svg width="6" height="10" viewBox="0 0 6 10"><path d="M6 0v10L0 5z" fill="#c2c2c2" /></svg>
      </button>
      <button type="button" aria-label="下一张工作表" className="ml-[23px] mt-[9px]">
        <svg width="6" height="10" viewBox="0 0 6 10"><path d="M0 0v10l6-5z" fill="#c2c2c2" /></svg>
      </button>
      <button type="button" className="ml-10 h-[26px] w-[59px] border-x border-b-2 border-x-[#ababab] border-b-[#217346] bg-white pb-[2px] text-[17px] font-medium leading-[22px] text-[#217346]">菜谱</button>
      <button type="button" className="ml-[10px] h-[26px] pb-1 text-[17px] leading-[22px] text-[#444]">统计专用</button>
      <div className="ml-[11px] mt-1 h-5 w-px bg-[#999]" />
      <button type="button" aria-label="新建工作表" className="ml-[34px] mt-[5px]">
        <svg width="20" height="20" viewBox="0 0 20 20" fill="none" stroke="#777"><circle cx="10" cy="10" r="9.400" /><path d="M10 5v10M5 10h10" strokeWidth="2" /></svg>
      </button>
      <div className="ml-auto mt-2 flex w-9 flex-col items-center gap-[2px]">
        <i className="size-[3px] bg-[#b0b0b0]" />
        <i className="size-[3px] bg-[#b0b0b0]" />
        <i className="size-[3px] bg-[#b0b0b0]" />
      </div>
      <div className="mr-[26px] mt-[5px] flex h-[19px] w-[727px] bg-[#dadada]">
        <button type="button" aria-label="向左滚动" className="flex w-5 items-center justify-center border border-[#ababab] bg-white">
          <svg width="5" height="9" viewBox="0 0 5 9"><path d="M5 0v9L0 4.500z" fill="#666" /></svg>
        </button>
        <div className="-ml-px w-[552px] border border-[#ababab] bg-white" />
        <button type="button" aria-label="向右滚动" className="ml-auto flex w-[17px] items-center justify-center bg-white">
          <svg width="5" height="9" viewBox="0 0 5 9"><path d="M0 0v9l5-4.500z" fill="#666" /></svg>
        </button>
      </div>
    </div>
  );
}

function StatusBar() {
  return (
    <div className="flex h-[27px] shrink-0 items-center justify-end bg-[#f3f3f3] text-[#606060]">
      <button type="button" aria-label="普通视图" className="flex h-full w-[50px] items-center justify-center bg-[#c6c6c6]">
        <svg width="17" height="15" viewBox="0 0 17 15" fill="none" stroke="#8a8a8a"><path d="M.5.500h16v14H.5zM.5 5h16M.5 10h16M6 .5v14M11 .5v14" /></svg>
      </button>
      <button type="button" aria-label="页面布局视图" className="ml-[15px]">
        <svg width="17" height="15" viewBox="0 0 17 15" fill="none" stroke="#707070"><path d="M.5.500h16v14H.5zM4.500.500v14M12.500.500v14M6 3.500h5M6 5.500h5M6 7.500h5M6 9.500h5M6 11.500h5" /></svg>
      </button>
      <button type="button" aria-label="分页预览" className="ml-[33px]">
        <svg width="17" height="16" viewBox="0 0 17 16" fill="none" stroke="#606060"><path d="M.5.500h16v15H.5zM.5 9.500h11v-9M6.500.500v9" /></svg>
      </button>
      <button type="button" aria-label="缩小" className="ml-[27px] flex w-2 justify-center">
        <svg width="8" height="9" viewBox="0 0 8 9" stroke="#606060"><path d="M0 4.500h8" /></svg>
      </button>
      <div className="relative ml-[6px] flex h-4 w-[128px] items-center">
        <div className="h-px w-full bg-[#a0a0a0]" />
        <div className="absolute left-[60px] top-[1px] h-[14px] w-[6px] bg-[#666]" />
        <input type="range" aria-label="显示比例" min={10} max={200} defaultValue={100} className="absolute inset-0 w-full opacity-0" />
      </div>
      <button type="button" aria-label="放大" className="ml-[3px]">
        <svg width="9" height="9" viewBox="0 0 9 9" stroke="#606060"><path d="M0 4.500h9M4.500 0v9" /></svg>
      </button>
      <span className="relative z-10 ml-[18px] w-[49px] text-[15px] text-[#444]">100%</span>
    </div>
  );
}

/* ---------- overlays ---------- */

function Watermark() {
  return (
    <div className="pointer-events-none absolute bottom-0 right-0 flex h-20 items-start text-white opacity-75">
      <svg width="180" height="80" viewBox="0 0 180 80" fill="none" stroke="#fff" aria-hidden="true">
        {[0, 87].map((x) => (
          <g key={x} transform={`translate(${x} 0)`}>
            <path d="M8 7l10-3 4 47c22-2 34 6 32 14-3 8-18 14-37 15z M23 59l2 16 15-8z" fill="#fff" fillRule="evenodd" stroke="none" />
            <path d="M54 39l5 35M64 24l5 50M75 39l3 34" strokeWidth="7" />
            <path d="M52 28l1 6M77 25l0 9" strokeWidth="5" />
          </g>
        ))}
      </svg>
      <span className="ml-[66px] pt-2 text-[56px] leading-[64px]">只五毒毒</span>
    </div>
  );
}

function Meter() {
  const bars = ["#7b3c43", "#d9605e", "#e0705a", "#e58a56", "#e5a552", "#d8c04f", "#cfd052", "#b7d458", "#93cf62", "#76c86c", "#62c383", "#55c09a", "#4cc0ad", "#46c4bd"];
  return (
    <div className="pointer-events-none absolute right-0 top-[857px] flex h-[73px] w-3 flex-col items-end gap-px rounded-l-md border-2 border-r-0 border-[#d9b13e] border-l-[#555a66] bg-[#474d5c] pb-1 pt-2">
      {bars.map((c) => (
        <i key={c} className="h-[3px] w-[6px]" style={{ background: c }} />
      ))}
    </div>
  );
}

export default function App() {
  return (
    <div className="relative flex h-screen w-full flex-col overflow-hidden border-l-2 border-[#1f4362] bg-[#e6e6e6] font-['Open_Sans','Noto_Sans_CJK_SC',sans-serif]">
      <Header />
      <Ribbon />
      <FormulaBar />
      <main className="flex min-h-0 flex-1 bg-[#e6e6e6]">
        <div className="mr-[3px] min-w-0 flex-1 overflow-hidden border-b border-r border-[#999]">
          <Sheet />
        </div>
        <VScroll />
      </main>
      <SheetTabs />
      <StatusBar />
      <Watermark />
      <Meter />
    </div>
  );
}
